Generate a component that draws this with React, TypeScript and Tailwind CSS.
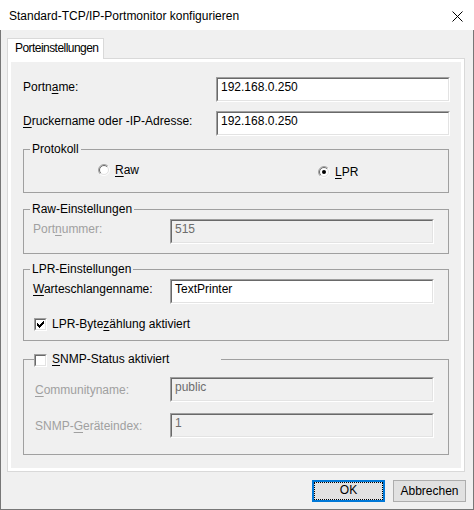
import React from "react";

function Field({ value, w, disabled }: { value: string; w: string; disabled?: boolean }) {
  return (
    <div className={`${w} h-[25px] shrink-0 border border-t-[#a0a0a0] border-l-[#a0a0a0] border-b-white border-r-white`}>
      <div
        className={`h-full border border-t-[#696969] border-l-[#696969] border-b-[#e3e3e3] border-r-[#e3e3e3] pl-[3px] whitespace-nowrap overflow-hidden ${
          disabled ? "bg-[#f0f0f0] text-[#6d6d6d]" : "bg-white text-black"
        }`}
      >
        {value}
      </div>
    </div>
  );
}

function Radio({ checked }: { checked?: boolean }) {
  return (
    <svg width="12" height="12" viewBox="0 0 12 12" className="shrink-0">
      <circle cx="6" cy="6" r="4.5" fill="#ffffff" />
      <path d="M2.111 9.889 A5.5 5.5 0 0 1 9.889 2.111" fill="none" stroke="#a0a0a0" strokeWidth="1" />
      <path d="M9.889 2.111 A5.5 5.5 0 0 1 2.111 9.889" fill="none" stroke="#ffffff" strokeWidth="1" />
      <path d="M2.818 9.182 A4.5 4.5 0 0 1 9.182 2.818" fill="none" stroke="#696969" strokeWidth="1" />
      <path d="M9.182 2.818 A4.5 4.5 0 0 1 2.818 9.182" fill="none" stroke="#e3e3e3" strokeWidth="1" />
      {checked && <circle cx="6" cy="6" r="2" fill="#000000" />}
    </svg>
  );
}

function Check({ checked, className }: { checked?: boolean; className?: string }) {
  const tops = [2, 3, 4, 3, 2, 1, 0];
  return (
    <div className={`w-[13px] h-[13px] shrink-0 border border-t-[#a0a0a0] border-l-[#a0a0a0] border-b-white border-r-white ${className ?? ""}`}>
      <div className="w-full h-full border border-t-[#696969] border-l-[#696969] border-b-[#e3e3e3] border-r-[#e3e3e3] bg-white">
        {checked && (
          <svg width="9" height="9" viewBox="0 0 9 9" shapeRendering="crispEdges" className="block">
            {tops.map((t, c) => (
              <rect key={c} x={c + 1} y={t + 1} width="1" height="3" fill="#000000" />
            ))}
          </svg>
        )}
      </div>
    </div>
  );
}

function U({ children }: { children: React.ReactNode }) {
  return <span className="underline underline-offset-[2px] decoration-1">{children}</span>;
}

export default function App() {
  return (
    <div className="w-[474px] h-[510px] bg-[#f0f0f0] flex flex-col font-['Liberation_Sans',Arial,sans-serif] text-[12px] leading-[16px] text-black overflow-hidden">
      {/* Title bar */}
      <div className="h-[30px] shrink-0 bg-white flex items-start justify-between pl-[9px] pt-[8px] pr-[11px]">
        <span>Standard-TCP/IP-Portmonitor konfigurieren</span>
        <svg width="11" height="11" viewBox="0 0 11 11" className="mt-[3px]">
          <path d="M0.5 0.5 L10.5 10.5 M10.5 0.5 L0.5 10.5" stroke="#000000" strokeWidth="1" fill="none" />
        </svg>
      </div>

      {/* Body */}
      <div className="flex-1 flex flex-col border-x border-b border-[#777777] pt-[8px] pl-[6px]">
        {/* Tab strip */}
        <div className="flex">
          <div className="relative z-10 w-[97px] h-[21px] -mb-px bg-white border border-b-0 border-[#d9d9d9] pl-[7px] pt-[1px] whitespace-nowrap tracking-[-0.55px]">
            Porteinstellungen
          </div>
        </div>

        {/* Panel */}
        <div className="w-[458px] h-[414px] border border-[#d9d9d9] bg-white p-[3px]">
          <div className="h-full bg-[#f0f0f0] pt-[15px] pl-[12px] flex flex-col">
            <div className="flex items-start">
              <span className="w-[193px] mt-[2px]">
                Portn<U>a</U>me:
              </span>
              <Field w="w-[234px]" value="192.168.0.250" />
            </div>
            <div className="flex items-start mt-[9px]">
              <span className="w-[193px] mt-[2px]">
                <U>D</U>ruckername oder -IP-Adresse:
              </span>
              <Field w="w-[234px]" value="192.168.0.250" />
            </div>

            {/* Protokoll */}
            <fieldset className="mt-[5px] w-[426px] h-[52px] border border-[#a0a0a0]">
              <legend className="ml-[6px] px-[2px]">Protokoll</legend>
              <div className="flex items-start">
                <div className="ml-[74px] w-[220px] mt-[5px] flex items-center h-[16px]">
                  <Radio />
                  <span className="ml-[5px]">
                    <U>R</U>aw
                  </span>
                </div>
                <div className="mt-[7px] flex items-center h-[16px]">
                  <Radio checked />
                  <span className="ml-[5px]">
                    <U>L</U>PR
                  </span>
                </div>
              </div>
            </fieldset>

            {/* Raw-Einstellungen */}
            <fieldset className="mt-[8px] w-[426px] h-[53px] border border-[#a0a0a0]">
              <legend className="ml-[6px] px-[2px]">Raw-Einstellungen</legend>
              <div className="flex items-start mt-[2px] pl-[9px]">
                <span className="w-[137px] mt-[2px] text-[#a0a0a0]">
                  Port<U>n</U>ummer:
                </span>
                <Field w="w-[264px]" value="515" disabled />
              </div>
            </fieldset>

            {/* LPR-Einstellungen */}
            <fieldset className="mt-[7px] w-[426px] h-[80px] border border-[#a0a0a0]">
              <legend className="ml-[6px] px-[2px]">LPR-Einstellungen</legend>
              <div className="flex items-start mt-[2px] pl-[9px]">
                <span className="w-[137px] mt-[2px]">
                  <U>W</U>arteschlangenname:
                </span>
                <Field w="w-[264px]" value="TextPrinter" />
              </div>
              <div className="flex items-center h-[16px] mt-[12px] pl-[10px]">
                <Check checked />
                <span className="ml-[5px]">
                  LPR-Byte<U>z</U>ählung aktiviert
                </span>
              </div>
            </fieldset>

            {/* SNMP */}
            <fieldset className="mt-[10px] w-[426px] h-[104px] border border-[#a0a0a0]">
              <legend className="ml-[10px] p-0 w-[187px]">
                <div className="flex items-start h-[16px]">
                  <Check className="mt-[3px]" />
                  <span className="ml-[5px]">
                    <U>S</U>NMP-Status aktiviert
                  </span>
                </div>
              </legend>
              <div className="flex items-start mt-[10px] pl-[11px]">
                <span className="w-[135px] mt-[5px] text-[#a0a0a0]">
                  <U>C</U>ommunityname:
                </span>
                <Field w="w-[264px]" value="public" disabled />
              </div>
              <div className="flex items-start mt-[11px] pl-[11px]">
                <span className="w-[135px] mt-[5px] text-[#a0a0a0]">
                  SNMP-<U>G</U>eräteindex:
                </span>
                <Field w="w-[264px]" value="1" disabled />
              </div>
            </fieldset>
          </div>
        </div>

        {/* Buttons */}
        <div className="flex justify-end gap-[8px] pr-[7px] mt-[8px]">
          <button className="w-[73px] h-[22px] border-2 border-[#0078d7] bg-[#e1e1e1] p-0">
            <div className="w-full h-full border border-dotted border-black flex items-center justify-center pb-[2px]">
              OK
            </div>
          </button>
          <button className="w-[73px] h-[22px] border border-[#adadad] bg-[#e1e1e1] flex items-center justify-center p-0">
            Abbrechen
          </button>
        </div>
      </div>
    </div>
  );
}
